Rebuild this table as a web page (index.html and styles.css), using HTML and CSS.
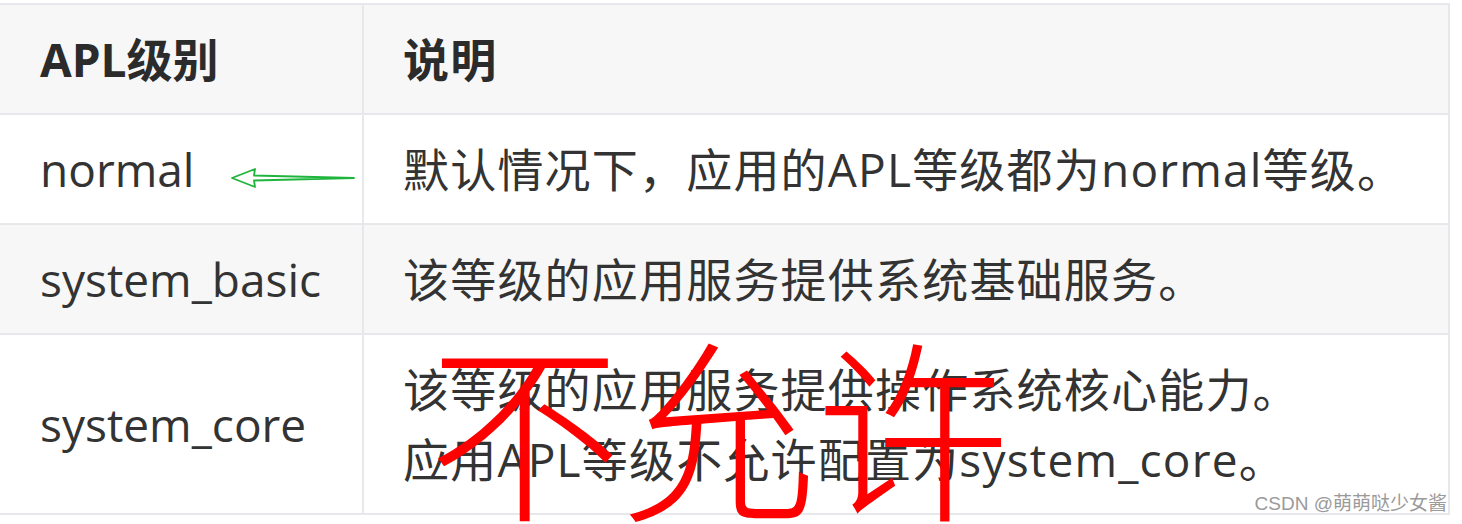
FILE: index.html
```html
<!DOCTYPE html>
<html lang="zh-CN">
<head>
    <meta charset="UTF-8">
    <meta name="viewport" content="width=device-width, initial-scale=1.0">
    <title>APL级别</title>
    <link rel="stylesheet" href="styles.css">
</head>
<body>
    <div class="page">
        <table class="apl-table">
            <thead>
                <tr>
                    <th class="col-level">APL级别</th>
                    <th class="col-desc">说明</th>
                </tr>
            </thead>
            <tbody>
                <tr>
                    <td class="col-level">normal</td>
                    <td class="col-desc">默认情况下，应用的APL等级都为normal等级。</td>
                </tr>
                <tr class="shaded">
                    <td class="col-level">system_basic</td>
                    <td class="col-desc">该等级的应用服务提供系统基础服务。</td>
                </tr>
                <tr>
                    <td class="col-level">system_core</td>
                    <td class="col-desc">该等级的应用服务提供操作系统核心能力。<br>应用APL等级不允许配置为system_core。</td>
                </tr>
            </tbody>
        </table>

        <!-- hand-drawn annotation on top of the table -->
        <svg class="arrow" width="126" height="24" viewBox="0 0 126 24">
            <path d="M124 12 L24 9.5 L25 3 L2 12 L25 21 L24 14.5 Z" fill="none" stroke="#1fb53c" stroke-width="1.8" stroke-linejoin="round"/>
        </svg>
        <div class="stamp">不允许</div>
        <div class="watermark">CSDN @萌萌哒少女酱</div>
    </div>
</body>
</html>
```

FILE: styles.css
```css
body {
    margin: 0;
    background: #fff;
    font-family: "Open Sans", "Noto Sans CJK SC", sans-serif;
    color: #333;
    overflow: hidden;
}
.page {
    position: relative;
    height: 524px;
    overflow: hidden;
    padding-top: 3px;
    box-sizing: border-box;
}
.apl-table {
    border-collapse: collapse;
    table-layout: fixed;
    margin-left: -2px;
    width: 1452px;
    font-size: 46px;
}
.apl-table th,
.apl-table td {
    border: 2px solid #e6e8ec;
    text-align: left;
    vertical-align: middle;
    padding: 19px 40px;
    line-height: 70px;
    white-space: nowrap;
}
.apl-table th {
    background: #f7f7f7;
    font-weight: bold;
    color: #2b2b2b;
}
.apl-table .col-level {
    width: 364px;
    padding-left: 40px;
    box-sizing: border-box;
}
.apl-table .col-desc {
    padding-left: 39px;
    letter-spacing: 1.2px;
}
.shaded td {
    background: #f7f7f7;
}
.arrow {
    position: absolute;
    left: 230px;
    top: 166px;
}
.stamp {
    position: absolute;
    left: 428px;
    top: 326px;
    font-family: "Noto Sans CJK SC", sans-serif;
    font-weight: 300;
    font-size: 194px;
    line-height: 1;
    color: #ff0000;
    letter-spacing: 0;
}
.watermark {
    position: absolute;
    right: 15px;
    bottom: 9px;
    font-family: "Liberation Sans", "Noto Sans CJK SC", sans-serif;
    font-size: 19px;
    color: #9a9a9a;
    text-shadow: 0 0 2px #fff;
}
```
